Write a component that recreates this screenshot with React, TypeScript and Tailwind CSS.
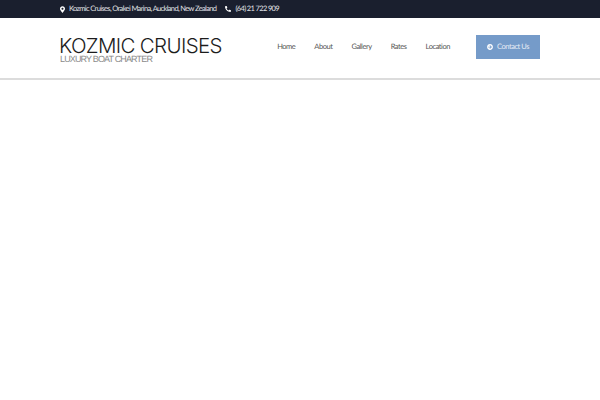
import { FaMapMarkerAlt, FaPhone, FaArrowCircleRight } from "react-icons/fa";

const nav = ["Home", "About", "Gallery", "Rates", "Location"];

export default function App() {
  return (
    <div className="w-[600px] h-[400px] bg-white overflow-hidden font-['Lato',sans-serif] [text-rendering:geometricPrecision]">
      <div className="h-[18px] bg-[#1a1f2e] flex items-center pl-[60px] text-[#e0e2e6] text-[7.5px] tracking-[-0.64px] whitespace-nowrap">
        <FaMapMarkerAlt className="w-[5px] h-[7px] text-white mr-[4px]" />
        <span>Kozmic Cruises, Orakei Marina, Auckland, New Zealand</span>
        <FaPhone className="w-[6px] h-[6px] text-white ml-[9px] mr-[4px] -scale-x-100" />
        <span>(64) 21 722 909</span>
      </div>
      <div className="h-[62px] border-b-2 border-[#dcdcdc] flex items-start pl-[60px] pr-[60px]">
        <div className="mt-[17px] font-['Inter',sans-serif] whitespace-nowrap">
          <div className="text-[20.5px] leading-[21px] font-light text-[#1c1c1c] tracking-[-0.65px] -ml-px">KOZMIC CRUISES</div>
          <div className="text-[9px] leading-[9px] -mt-[1px] font-['Liberation_Sans',sans-serif] text-[#8a8a8a] tracking-[-0.85px]">LUXURY BOAT CHARTER</div>
        </div>
        <nav className="ml-auto mt-[17px] flex items-center gap-[19px] text-[7.5px] text-[#555] tracking-[-0.45px] whitespace-nowrap">
          {nav.map((n) => (
            <span key={n}>{n}</span>
          ))}
          <a className="ml-[7px] w-[64px] h-[24px] bg-[#759bc9] text-[#e6ecf5] flex items-center justify-center gap-[4px]">
            <FaArrowCircleRight className="w-[6px] h-[6px] text-white" />
            Contact Us
          </a>
        </nav>
      </div>
    </div>
  );
}
